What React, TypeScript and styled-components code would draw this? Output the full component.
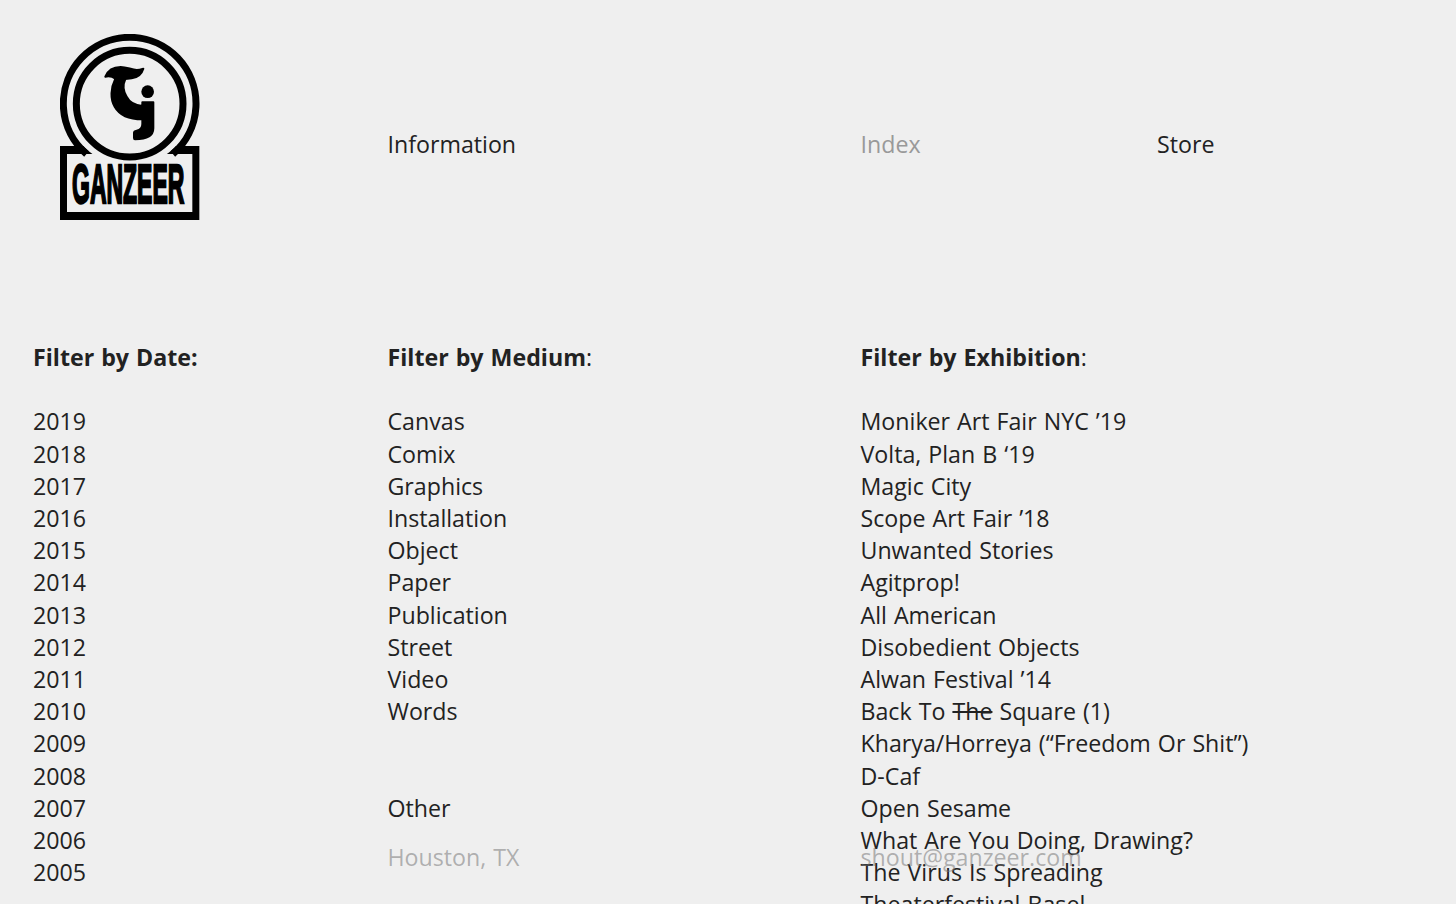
import React from "react";
import styled, { createGlobalStyle } from "styled-components";

const Global = createGlobalStyle`
  html, body { margin: 0; padding: 0; height: 904px; overflow: hidden; background: #efefef; }
  body { font-family: "Open Sans", "Noto Sans", sans-serif; font-size: 23.2px; word-spacing: 1px; line-height: 32.2px; color: #222; }
`;

const Page = styled.div`
  position: relative;
  height: 904px;
  overflow: hidden;
  box-sizing: border-box;
  padding: 33px 0 0 33px;
`;

const Grid = styled.div`
  display: grid;
  grid-template-columns: 354.5px 473px 296.5px 1fr;
`;

const LogoCell = styled.div`
  padding: 1px 0 0 27px;
  height: 307px;
`;

const NavLink = styled.a<{ $muted?: boolean }>`
  display: block;
  padding-top: 95px;
  color: ${(p) => (p.$muted ? "#999" : "#222")};
`;

const Columns = styled.div`
  display: grid;
  grid-template-columns: 354.5px 473px 1fr;
`;

const Heading = styled.h2`
  margin: 0 0 32.2px;
  font-size: inherit;
  line-height: inherit;
  font-weight: 700;
`;

const Colon = styled.span`
  font-weight: 400;
`;

const List = styled.ul`
  list-style: none;
  margin: 0;
  padding: 0;
`;

const Item = styled.li<{ $gap?: boolean }>`
  margin-top: ${(p) => (p.$gap ? "64.4px" : "0")};
  white-space: nowrap;
`;

const Struck = styled.span`
  text-decoration: line-through;
`;

const Footer = styled.footer`
  position: absolute;
  left: 387.5px;
  top: 841px;
  display: grid;
  grid-template-columns: 473px 1fr;
  color: rgba(120, 120, 120, 0.55);
`;

const Logo = () => (
  <svg width="140" height="186" viewBox="60 42 420 558" aria-label="Ganzeer logo">
    <rect x="60" y="378" width="418" height="222" fill="#000" />
    <rect x="81" y="402" width="376" height="174" fill="#efefef" />
    <circle cx="269" cy="251" r="188" fill="#efefef" />
    <path d="M139.4 402 A199 199 0 1 1 398.6 402" fill="none" stroke="#000" strokeWidth="21" />
    <circle cx="269" cy="251" r="160" fill="none" stroke="#000" strokeWidth="21" />
    <path
      d="M196 170 C204 150 220 141 242 141 C260 141 274 149 290 150 C298 150 304 148 310 146 C306 160 294 172 275 175 L256 177 C248 194 250 214 260 230 C268 246 286 256 307 258 L307 247 L340 247 L340 325 C340 346 325 358 285 358 C283 358 282 356 282 354 L282 338 C282 336 284 333 290 332 C302 330 307 322 307 312 L307 298 C270 298 240 288 224 260 C210 236 212 204 226 176 C218 170 205 168 196 170Z"
      fill="#000"
      stroke="#000"
      strokeWidth="6"
      strokeLinejoin="round"
    />
    <circle cx="323" cy="215" r="19" fill="#000" />
    <text
      transform="translate(96 548) scale(0.418 1)"
      fontFamily="'Liberation Sans', sans-serif"
      fontWeight="700"
      fontSize="165"
      fill="#000"
      stroke="#000"
      strokeWidth="1.8"
      vectorEffect="non-scaling-stroke"
    >
      GANZEER
    </text>
  </svg>
);

const dates = ["2019","2018","2017","2016","2015","2014","2013","2012","2011","2010","2009","2008","2007","2006","2005"];
const media = ["Canvas","Comix","Graphics","Installation","Object","Paper","Publication","Street","Video","Words"];

export default function App() {
  return (
    <Page>
      <Global />
      <Grid>
        <LogoCell><Logo /></LogoCell>
        <NavLink>Information</NavLink>
        <NavLink $muted>Index</NavLink>
        <NavLink>Store</NavLink>
      </Grid>
      <Columns>
        <section>
          <Heading>Filter by Date:</Heading>
          <List>{dates.map((d) => <Item key={d}>{d}</Item>)}</List>
        </section>
        <section>
          <Heading>Filter by Medium<Colon>:</Colon></Heading>
          <List>
            {media.map((d) => <Item key={d}>{d}</Item>)}
            <Item $gap>Other</Item>
          </List>
        </section>
        <section>
          <Heading>Filter by Exhibition<Colon>:</Colon></Heading>
          <List>
            <Item>Moniker Art Fair NYC ’19</Item>
            <Item>Volta, Plan B ‘19</Item>
            <Item>Magic City</Item>
            <Item>Scope Art Fair ’18</Item>
            <Item>Unwanted Stories</Item>
            <Item>Agitprop!</Item>
            <Item>All American</Item>
            <Item>Disobedient Objects</Item>
            <Item>Alwan Festival ’14</Item>
            <Item>Back To <Struck>The</Struck> Square (1)</Item>
            <Item>Kharya/Horreya (“Freedom Or Shit”)</Item>
            <Item>D-Caf</Item>
            <Item>Open Sesame</Item>
            <Item>What Are You Doing, Drawing?</Item>
            <Item>The Virus Is Spreading</Item>
            <Item>Theaterfestival Basel</Item>
          </List>
        </section>
      </Columns>
      <Footer>
        <span>Houston, TX</span>
        <span>shout@ganzeer.com</span>
      </Footer>
    </Page>
  );
}
